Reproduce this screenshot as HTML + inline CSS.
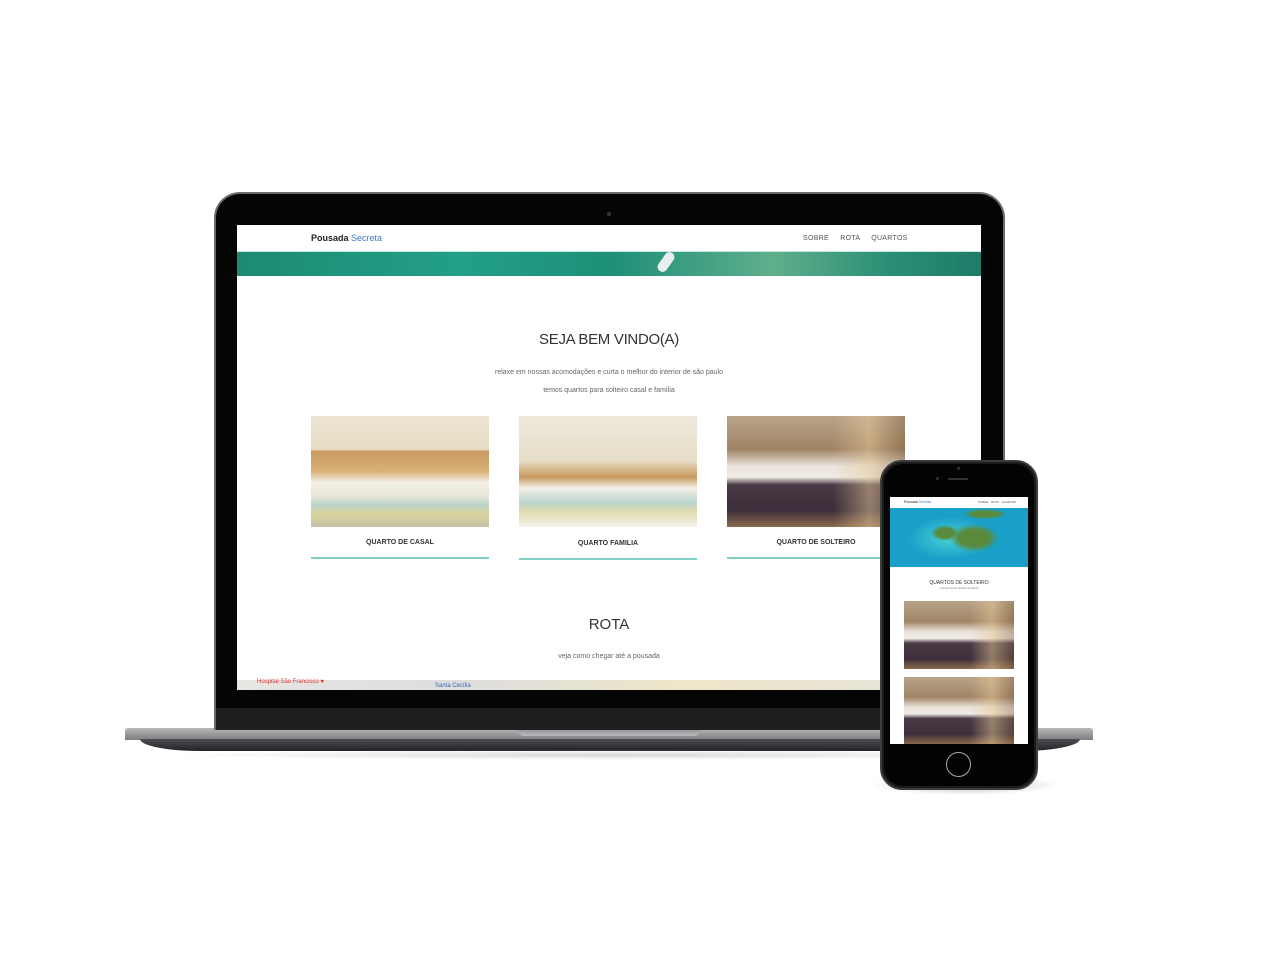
<!DOCTYPE html>
<html><head><meta charset="utf-8"><style>
*{margin:0;padding:0;box-sizing:border-box}
body{width:1280px;height:960px;background:#fff;position:relative;overflow:hidden;font-family:"Liberation Sans",sans-serif}
.a{position:absolute}
.t{position:absolute;white-space:nowrap;color:#333}
.room1{background:linear-gradient(180deg,#ece4d2 0%,#e8dcc4 30%,#c99a62 32%,#d9b27a 50%,#f2efe6 60%,#e9e6d8 72%,#bcd3c9 80%,#d8d49c 88%,#c8c0a8 100%)}
.room2{background:linear-gradient(180deg,#efe9dc 0%,#e7ddc8 40%,#c79a5e 55%,#f3f0e8 65%,#b9d4cd 78%,#e0dcb0 86%,#f4f1ea 100%)}
.room3{background:linear-gradient(90deg,rgba(0,0,0,0) 60%,rgba(230,200,150,.5) 80%,rgba(120,90,60,.4) 100%),linear-gradient(180deg,#b9a48a 0%,#a08466 30%,#e8e2da 45%,#f0ece6 55%,#4a3a46 62%,#3c2e3a 85%,#8a6a4e 100%)}
</style></head><body>
<div class="a" style="left:125px;top:728px;width:968px;height:12px;border-radius:3px 3px 0 0;background:linear-gradient(180deg,#b8b8ba,#7d7e81)"></div>
<div class="a" style="left:140px;top:739px;width:940px;height:12px;border-radius:0 0 60px 60px/0 0 12px 12px;background:linear-gradient(180deg,#4c4d50,#222326)"></div>
<div class="a" style="left:518px;top:728px;width:182px;height:8px;border-radius:0 0 6px 6px;background:linear-gradient(180deg,#8e8f92,#b8b9bb)"></div>
<div class="a" style="left:160px;top:750px;width:900px;height:10px;border-radius:50%;background:radial-gradient(#d8d8d8,rgba(255,255,255,0) 70%)"></div>
<div class="a" style="left:214px;top:192px;width:791px;height:538px;border-radius:26px 26px 0 0;background:#6a6b6e"></div>
<div class="a" style="left:216px;top:194px;width:787px;height:536px;border-radius:24px 24px 0 0;background:#050505"></div>
<div class="a" style="left:216px;top:708px;width:787px;height:22px;background:#1e1f21"></div>
<div class="a" style="left:607px;top:212px;width:4px;height:4px;border-radius:50%;background:#333"></div>
<div class="a" style="left:237px;top:225px;width:744px;height:465px;background:#fff;overflow:hidden">
 <div class="t" style="left:74px;top:8px;font-size:9px;font-weight:bold;color:#222">Pousada <span style="color:#3a78c8;font-weight:normal">Secreta</span></div>
 <div class="t" style="left:566px;top:10px;font-size:7px;color:#555;letter-spacing:.3px">SOBRE &nbsp;&nbsp;&nbsp; ROTA &nbsp;&nbsp;&nbsp; QUARTOS</div>
 <div class="a" style="left:0;top:26px;width:744px;height:25px;background:linear-gradient(90deg,#1c8a72,#23a088 30%,#1e8f78 50%,#5fae8c 72%,#2a8e74 88%,#1e7c68);border-top:1px solid #bfe7e0"></div>
 <div class="a" style="left:424px;top:26px;width:10px;height:22px;background:#e8eef2;border-radius:5px;transform:rotate(35deg)"></div>
 <div class="t" style="left:0;width:744px;text-align:center;top:106px;font-size:15px;color:#333;letter-spacing:-.3px">SEJA BEM VINDO(A)</div>
 <div class="t" style="left:0;width:744px;text-align:center;top:144px;font-size:7px;color:#666">relaxe em nossas acomodações e curta o melhor do interior de são paulo</div>
 <div class="t" style="left:0;width:744px;text-align:center;top:162px;font-size:7px;color:#666">temos quartos para solteiro casal e família</div>
 <div class="a room1" style="left:74px;top:191px;width:178px;height:111px"></div>
 <div class="a room2" style="left:282px;top:191px;width:178px;height:111px"></div>
 <div class="a room3" style="left:490px;top:191px;width:178px;height:111px"></div>
 <div class="t" style="left:74px;width:178px;text-align:center;top:314px;font-size:7px;font-weight:bold">QUARTO DE CASAL</div>
 <div class="t" style="left:282px;width:178px;text-align:center;top:315px;font-size:7px;font-weight:bold">QUARTO FAMILIA</div>
 <div class="t" style="left:490px;width:178px;text-align:center;top:314px;font-size:7px;font-weight:bold">QUARTO DE SOLTEIRO</div>
 <div class="a" style="left:74px;top:332px;width:178px;height:2px;background:#7fd0c4"></div>
 <div class="a" style="left:282px;top:333px;width:178px;height:2px;background:#7fd0c4"></div>
 <div class="a" style="left:490px;top:332px;width:178px;height:2px;background:#7fd0c4"></div>
 <div class="t" style="left:0;width:744px;text-align:center;top:391px;font-size:15px;color:#333">ROTA</div>
 <div class="t" style="left:0;width:744px;text-align:center;top:428px;font-size:7px;color:#666">veja como chegar até a pousada</div>
 <div class="a" style="left:0;top:455px;width:744px;height:10px;background:linear-gradient(90deg,#e8e6e2,#ddd 30%,#eee6c8 60%,#e4e2de)"></div>
 <div class="t" style="left:20px;top:454px;font-size:6px;color:#d33">Hospital São Francisco ♥</div>
 <div class="t" style="left:198px;top:458px;font-size:6px;color:#3a6ab0">Santa Cecília</div>
</div>
<div class="a" style="left:870px;top:775px;width:190px;height:20px;border-radius:50%;background:radial-gradient(#bbb,rgba(255,255,255,0) 70%)"></div>
<div class="a" style="left:880px;top:460px;width:158px;height:330px;border-radius:22px;background:#1a1a1a;border:2px solid #3c3c3c"></div>
<div class="a" style="left:884px;top:464px;width:150px;height:322px;border-radius:19px;background:#030303"></div>
<div class="a" style="left:948px;top:478px;width:20px;height:2px;border-radius:1px;background:#333"></div>
<div class="a" style="left:936px;top:477px;width:3px;height:3px;border-radius:50%;background:#333"></div>
<div class="a" style="left:957px;top:467px;width:3px;height:3px;border-radius:50%;background:#333"></div>
<div class="a" style="left:946px;top:752px;width:25px;height:25px;border-radius:50%;border:1.5px solid #aaa"></div>
<div class="a" style="left:890px;top:497px;width:138px;height:247px;background:#fff;overflow:hidden">
 <div class="t" style="left:14px;top:3px;font-size:3.5px;color:#222">Pousada <span style="color:#3a78c8">Secreta</span></div>
 <div class="t" style="left:88px;top:3px;font-size:3px;color:#555">SOBRE &nbsp; ROTA &nbsp; QUARTOS</div>
 <div class="a" style="left:0;top:11px;width:138px;height:59px;background:radial-gradient(ellipse 25px 14px at 84px 30px,#5a8a3c 60%,rgba(0,0,0,0)),radial-gradient(ellipse 14px 8px at 55px 25px,#5a8a3c 60%,rgba(0,0,0,0)),radial-gradient(ellipse 22px 5px at 95px 6px,#5a8a3c 60%,rgba(0,0,0,0)),radial-gradient(ellipse 60px 30px at 60px 30px,#48d2d8,#1aa0c8 70%),#1590c0"></div>
 <div class="t" style="left:0;width:138px;text-align:center;top:83px;font-size:5px;color:#333">QUARTOS DE SOLTEIRO</div>
 <div class="t" style="left:0;width:138px;text-align:center;top:90px;font-size:2.5px;color:#777">conheça nossos quartos de solteiro</div>
 <div class="a room3" style="left:14px;top:104px;width:110px;height:68px"></div>
 <div class="a room3" style="left:14px;top:180px;width:110px;height:67px"></div>
</div>
</body></html>
